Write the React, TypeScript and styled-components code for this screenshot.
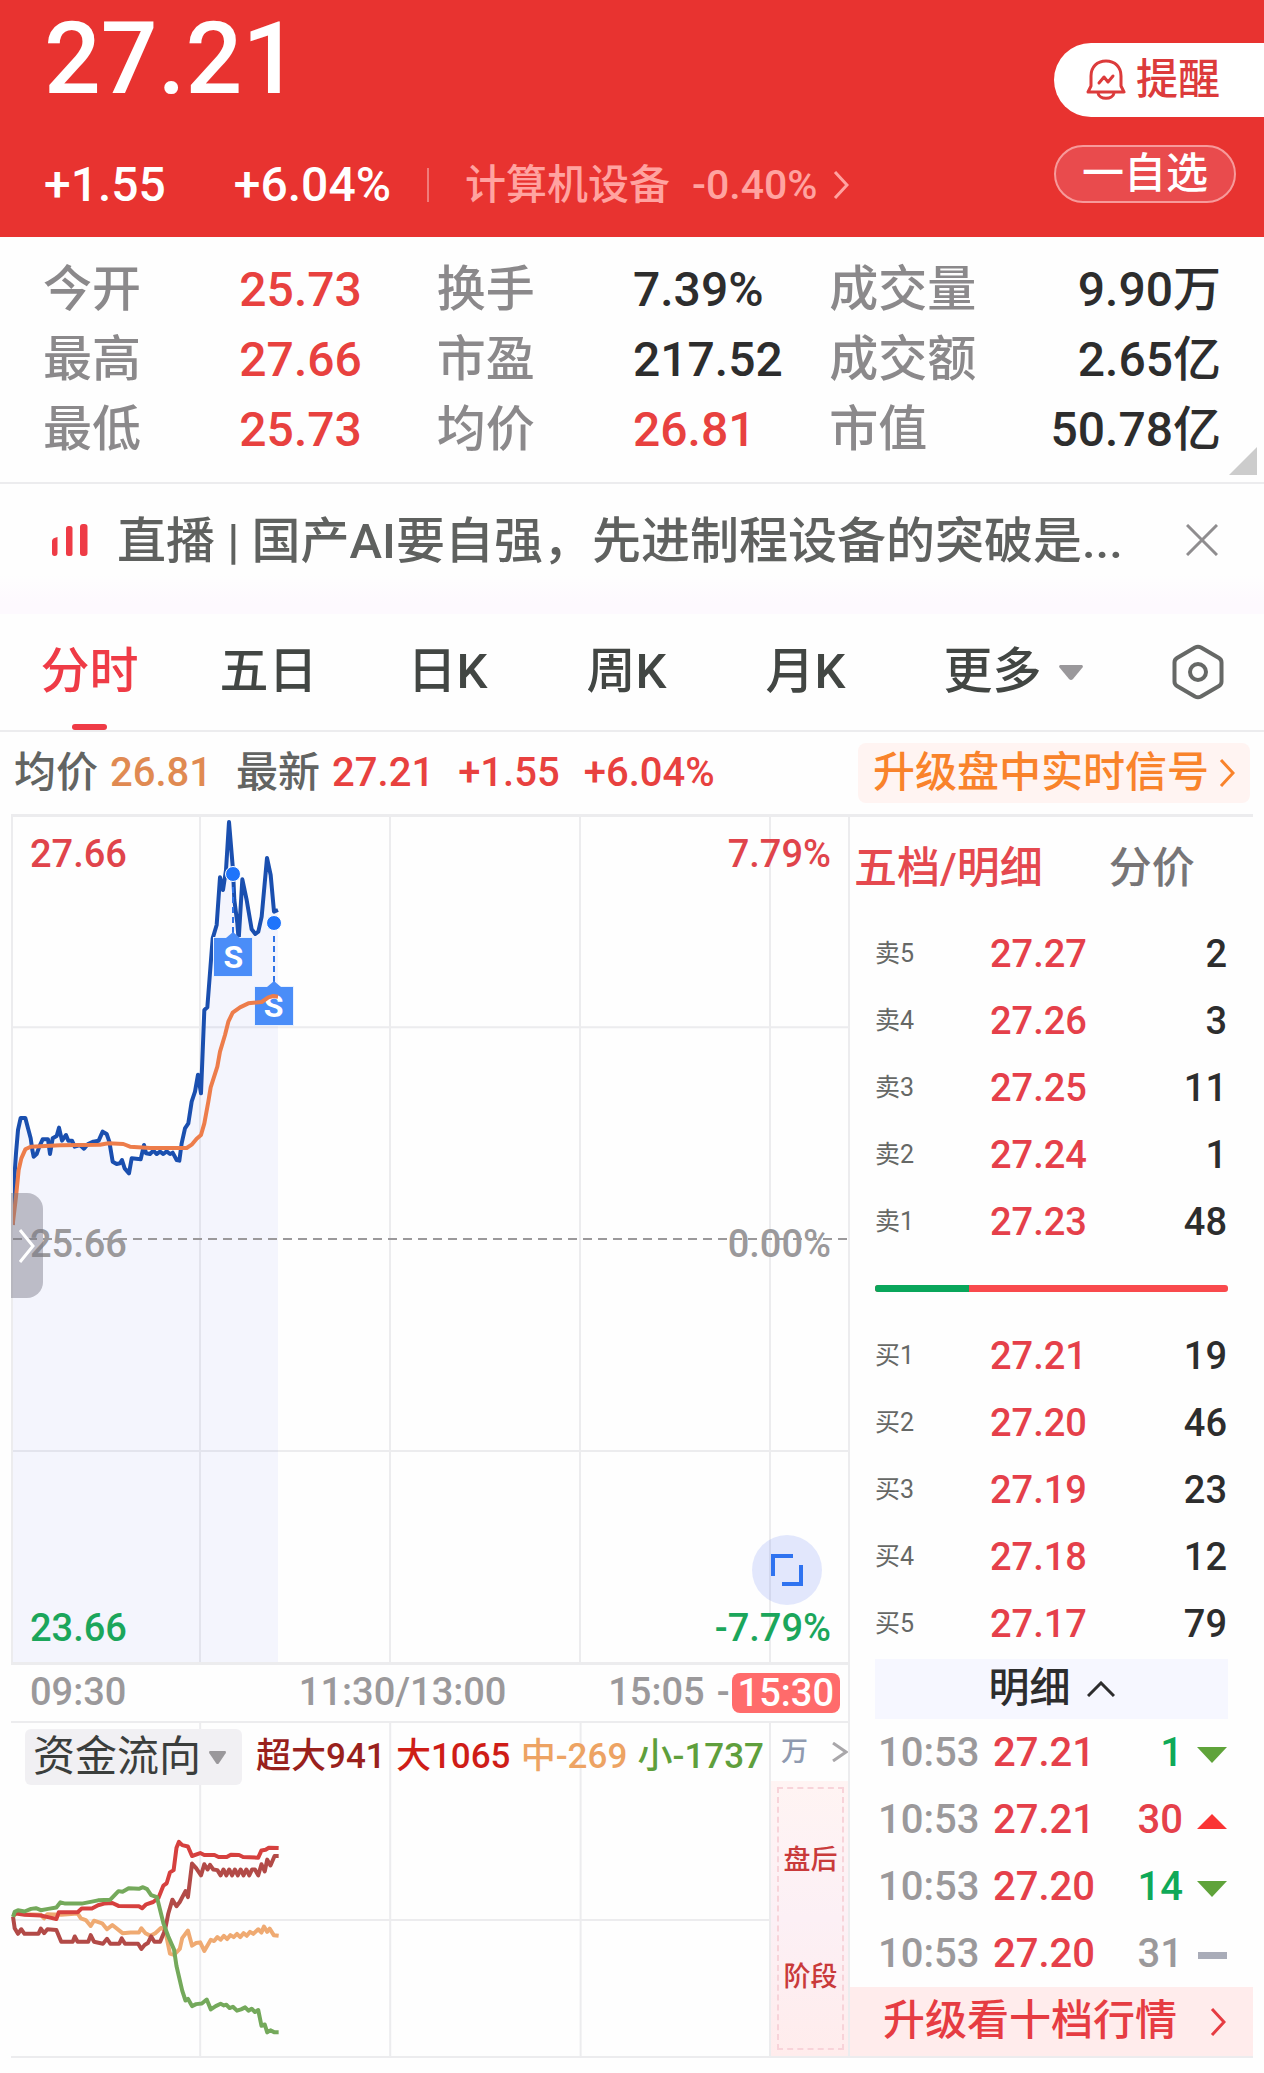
import React from "react";
import styled, { createGlobalStyle } from "styled-components";

const red = "#e8413f";
const line = "#ececee";

const GlobalStyle = createGlobalStyle`
  * { box-sizing: border-box; }
  body {
    margin: 0;
    background: #fefefe;
    color: #2d2d2d;
    font-family: Roboto, "Noto Sans CJK SC", sans-serif;
    font-weight: 500;
    line-height: 1.2;
  }
  button, select {
    margin: 0;
    padding: 0;
    border: 0;
    background: none;
    color: inherit;
    font: inherit;
    cursor: pointer;
  }
  a { color: inherit; text-decoration: none; }
`;

const Page = styled.div`
  display: flex;
  flex-direction: column;
`;

/* ---------- quote header ---------- */

const Header = styled.header`
  display: flex;
  justify-content: space-between;
  height: 237px;
  padding-left: 44px;
  background: #e83330;
  color: #fff;
`;

const Quote = styled.div`
  display: flex;
  flex-direction: column;
  justify-content: space-between;
  padding-bottom: 24px;
`;

const LastPrice = styled.div`
  font-size: 100px;
  line-height: 118px;
`;

const QuoteLine = styled.div`
  display: flex;
  align-items: center;
  font-size: 48px;
  line-height: 56px;
`;

const Percent = styled.span`
  margin: 0 36px 0 68px;
`;

const Sector = styled.a`
  display: flex;
  align-items: center;
  gap: 16px;
  height: 34px;
  padding-left: 36px;
  border-left: 2px solid #f07c7a;
  color: #ffa3a0;
  font-size: 41px;
`;

const SectorName = styled.span`
  margin-right: 6px;
`;

const HeaderActions = styled.div`
  display: flex;
  flex-direction: column;
  gap: 28px;
  width: 210px;
  padding-top: 43px;
`;

const RemindButton = styled.button`
  display: flex;
  align-items: center;
  gap: 10px;
  height: 74px;
  padding-left: 32px;
  border-radius: 37px 0 0 37px;
  background: #fff;
  color: #dc3b3b;
  font-size: 42px;
`;

const WatchButton = styled.button`
  width: 182px;
  height: 58px;
  border: 2px solid #f79a9a;
  border-radius: 29px;
  background: #e94b4d;
  font-size: 42px;
  line-height: 50px;
`;

/* ---------- key figures ---------- */

const Stats = styled.dl`
  position: relative;
  display: grid;
  grid-template-columns: 196fr 197fr 196fr 196fr 197fr 194fr;
  grid-auto-rows: 70px;
  margin: 0;
  padding: 18px 43px 17px;
  border-bottom: 2px solid ${line};
`;

const StatLabel = styled.dt`
  color: #8b898b;
  font-size: 49px;
  line-height: 70px;
`;

const StatValue = styled.dd<{ $color?: string; $right?: boolean }>`
  margin: 0;
  color: ${(p) => p.$color ?? "#2d2d2d"};
  font-size: 48px;
  line-height: 70px;
  text-align: ${(p) => (p.$right ? "right" : "left")};
  white-space: nowrap;
`;

const StatsCorner = styled.svg`
  position: absolute;
  right: 7px;
  bottom: 7px;
`;

/* ---------- live banner ---------- */

const LiveBar = styled.div`
  display: flex;
  align-items: center;
  height: 130px;
  padding: 0 46px 18px 50px;
  background: linear-gradient(#fefefe 70%, #fdf9fe 92%);
`;

const LiveText = styled.a`
  flex: 1;
  min-width: 0;
  margin-left: 26px;
  padding-top: 4px;
  overflow: hidden;
  color: #5f615f;
  font-size: 49px;
  line-height: 70px;
  white-space: nowrap;
`;

const IconButton = styled.button`
  display: flex;
  align-items: center;
  justify-content: center;
`;

/* ---------- period tabs ---------- */

const Tabs = styled.nav`
  display: grid;
  grid-template-columns: repeat(5, 179fr) 236fr 133fr;
  height: 118px;
  border-bottom: 2px solid ${line};
`;

const Tab = styled.button<{ $active?: boolean }>`
  position: relative;
  display: flex;
  align-items: center;
  justify-content: center;
  gap: 17px;
  color: ${(p) => (p.$active ? "#ef3b46" : "#424643")};
  font-size: 49px;

  &::after {
    content: "";
    display: ${(p) => (p.$active ? "block" : "none")};
    position: absolute;
    bottom: 0;
    width: 35px;
    height: 6px;
    border-radius: 3px;
    background: #ef3b46;
  }
`;

/* ---------- price line above the chart ---------- */

const PriceLine = styled.div`
  display: flex;
  align-items: center;
  justify-content: space-between;
  height: 82px;
  padding: 0 14px;
`;

const Prices = styled.div`
  display: flex;
  align-items: center;
  gap: 24px;
  font-size: 40px;
  line-height: 60px;
`;

const PriceItem = styled.span<{ $color: string }>`
  display: flex;
  gap: 12px;
  color: ${(p) => p.$color};
`;

const PriceName = styled.span`
  color: #626462;
  font-size: 42px;
`;

const SignalLink = styled.a`
  display: flex;
  align-items: center;
  gap: 10px;
  height: 60px;
  padding: 0 15px;
  border-radius: 8px;
  background: #fff4f2;
  color: #f9832b;
  font-size: 42px;
`;

/* ---------- main area ---------- */

const Main = styled.main`
  display: grid;
  grid-template-columns: minmax(0, 839fr) minmax(0, 403fr);
  margin: 0 11px 15px;
  border-top: 3px solid ${line};
`;

const ChartColumn = styled.section`
  display: flex;
  flex-direction: column;
  border-right: 2px solid ${line};
  border-bottom: 2px solid ${line};
`;

const PriceChart = styled.div`
  position: relative;
  height: 848px;
  border-left: 2px solid ${line};
  border-bottom: 3px solid ${line};
`;

const Plot = styled.svg`
  position: absolute;
  inset: 0;
  width: 100%;
  height: 100%;

  * { vector-effect: non-scaling-stroke; }
`;

const AxisLabel = styled.span<{ $top: number; $right?: boolean; $color: string }>`
  position: absolute;
  top: ${(p) => p.$top}px;
  ${(p) => (p.$right ? "right: 17px;" : "left: 17px;")}
  color: ${(p) => p.$color};
  font-size: 38px;
  line-height: 44px;
`;

const Marker = styled.div`
  position: absolute;
  display: flex;
  flex-direction: column;
  align-items: center;
  width: 40px;
  margin-left: -20px;
`;

const MarkerDot = styled.span`
  width: 16px;
  height: 16px;
  border: 1px solid #fff;
  border-radius: 50%;
  background: #1f74fb;
`;

const MarkerStem = styled.span`
  height: 46px;
  margin: 5px 0 4px;
  border-left: 2px dashed #2f73e6;
`;

const MarkerFlag = styled.span`
  position: relative;
  width: 40px;
  height: 40px;
  border: 1px solid #e8f1ff;
  background: #4a8df8;
  color: #fff;
  font-size: 32px;
  font-weight: 700;
  line-height: 38px;
  text-align: center;

  &::before {
    content: "";
    position: absolute;
    top: -6px;
    left: 12px;
    border: 7px solid transparent;
    border-top: 0;
    border-bottom: 6px solid #4a8df8;
  }
`;

const DrawerHandle = styled.button`
  position: absolute;
  top: 376px;
  left: -2px;
  display: flex;
  align-items: center;
  justify-content: center;
  width: 32px;
  height: 105px;
  border-radius: 0 16px 16px 0;
  background: rgba(120, 120, 132, 0.45);
`;

const ExpandButton = styled.button`
  position: absolute;
  right: 26px;
  bottom: 57px;
  display: flex;
  align-items: center;
  justify-content: center;
  width: 70px;
  height: 70px;
  border-radius: 50%;
  background: rgba(80, 115, 245, 0.16);
`;

const TimeAxis = styled.div`
  display: grid;
  grid-template-columns: 270fr auto 335fr;
  align-items: center;
  height: 58px;
  padding: 0 8px 0 19px;
  border-bottom: 2px solid ${line};
  color: #9b999b;
  font-size: 38px;
`;

const SessionEnd = styled.span`
  display: flex;
  align-items: center;
  justify-content: flex-end;
`;

const EndBadge = styled.span`
  margin-left: 2px;
  padding: 0 6px;
  border-radius: 8px;
  background: #ff6b6b;
  color: #fff;
  line-height: 40px;
`;

const Dash = styled.span`
  margin-left: 12px;
`;

/* ---------- capital flow ---------- */

const Flow = styled.div`
  display: grid;
  grid-template-columns: minmax(0, 1fr) 77px;
  flex: 1;
`;

const FlowPlot = styled.div`
  position: relative;
  border-right: 2px solid ${line};
`;

const FlowLegend = styled.div`
  position: relative;
  display: flex;
  align-items: center;
  gap: 14px;
  padding: 6px 5px 0 14px;
`;

const FlowPicker = styled.label`
  position: relative;
  display: flex;
  align-items: center;
  gap: 8px;
  height: 56px;
  padding: 0 16px 0 8px;
  border-radius: 6px;
  background: #f1f0f3;
`;

const FlowSelect = styled.select`
  width: 168px;
  height: 56px;
  appearance: none;
  color: #3b3e3c;
  font-size: 42px;
  font-weight: 400;
  line-height: 56px;
`;

const FlowValues = styled.div`
  display: flex;
  flex: 1;
  justify-content: space-between;
  font-size: 35px;
  line-height: 48px;
  white-space: nowrap;
`;

const FlowValue = styled.span<{ $color: string }>`
  color: ${(p) => p.$color};
`;

const FlowSide = styled.div`
  display: flex;
  flex-direction: column;
`;

const UnitLink = styled.a`
  display: flex;
  align-items: center;
  justify-content: space-between;
  height: 58px;
  padding-left: 10px;
  color: #8f9ab0;
  font-size: 27px;

  svg { color: #a9a7aa; }
`;

const AfterHours = styled.div`
  flex: 1;
  padding: 6px 4px 6px 6px;
  background: linear-gradient(#fff4f3, #fcf0f5 50%, #ffecec);
`;

const AfterHoursFrame = styled.div`
  display: flex;
  flex-direction: column;
  align-items: center;
  justify-content: center;
  gap: 85px;
  height: 100%;
  border: 2px dashed #f8d3d9;
  color: #c93a3a;
  font-size: 27px;
`;

/* ---------- order book ---------- */

const Book = styled.aside`
  display: flex;
  flex-direction: column;
  border-bottom: 2px solid ${line};
`;

const BookTabs = styled.div`
  display: flex;
  gap: 66px;
  height: 103px;
  padding: 0 4px;
  font-size: 43px;
`;

const BookTab = styled.button<{ $active?: boolean }>`
  color: ${(p) => (p.$active ? "#e5494f" : "#777577")};
`;

const DepthTable = styled.table`
  width: calc(100% - 50px);
  margin: 0 25px;
  border-collapse: collapse;
  table-layout: fixed;
`;

const DepthCell = styled.td<{ $color?: string; $right?: boolean }>`
  height: 67px;
  padding: 0 1px;
  color: ${(p) => p.$color ?? "#2d2d2d"};
  font-size: 38px;
  line-height: 44px;
  text-align: ${(p) => (p.$right ? "right" : "left")};
`;

const DepthLabel = styled.th`
  width: 114px;
  padding: 0;
  color: #666866;
  font-size: 25px;
  font-weight: 400;
  text-align: left;
`;

const Balance = styled.div`
  display: flex;
  height: 7px;
  margin: 30px 25px;
  overflow: hidden;
  border-radius: 3px;
  background: #f94a4d;
`;

const BalanceBuy = styled.span`
  background: #09a65b;
`;

const DetailToggle = styled.button`
  display: flex;
  align-items: center;
  justify-content: center;
  gap: 16px;
  height: 60px;
  margin: 2px 25px 0;
  background: #f6f7ff;
  color: #2d2d2d;
  font-size: 41px;
`;

const TradeTable = styled.table`
  width: calc(100% - 54px);
  margin: 0 26px 0 28px;
  border-collapse: collapse;
  table-layout: fixed;
`;

const TradeCell = styled.td<{ $color: string; $width: number; $right?: boolean }>`
  width: ${(p) => p.$width}px;
  height: 67px;
  padding: 0;
  color: ${(p) => p.$color};
  font-size: 40px;
  line-height: 44px;
  text-align: ${(p) => (p.$right ? "right" : "left")};

  svg { vertical-align: middle; }
`;

const UpgradeLink = styled.a`
  display: flex;
  align-items: center;
  justify-content: space-between;
  flex: 1;
  min-height: 69px;
  padding: 0 27px 0 33px;
  background: #ffecec;
  color: #e63c42;
  font-size: 42px;
`;

/* ---------- icons ---------- */

const Chevron = ({ w = 16, h = 28, stroke = 3 }: { w?: number; h?: number; stroke?: number }) => (
  <svg width={w} height={h} viewBox={`0 0 ${w} ${h}`} fill="none" stroke="currentColor" strokeWidth={stroke} aria-hidden="true">
    <path d={`M2 1 L${w - 2} ${h / 2} L2 ${h - 1}`} />
  </svg>
);

const Caret = ({ w, h, color }: { w: number; h: number; color: string }) => (
  <svg width={w} height={h} viewBox="0 0 24 15" preserveAspectRatio="none" fill={color} aria-hidden="true">
    <path d="M1 0 H23 Q24.500 1 23.500 2.500 L14 14 Q12 16 10 14 L.5 2.500 Q-.5 1 1 0Z" />
  </svg>
);

const BellIcon = () => (
  <svg width="40" height="42" viewBox="0 0 40 42" fill="none" stroke="currentColor" strokeWidth="3" strokeLinejoin="round" aria-hidden="true">
    <path d="M5 27 V17 C5 8 11 2 20 2 S35 8 35 17 V27 L38 33 H2 Z" />
    <path d="M12 34 C13 41 27 41 28 34" />
    <path d="M13 24 L18 18 L22 23 L27 17" strokeLinecap="round" />
  </svg>
);

const LiveIcon = () => (
  <svg width="41" height="34" viewBox="0 0 41 34" fill="#ee3b46" aria-hidden="true">
    <path d="M2 18 Q2 15 7.500 14 V30 Q7.500 33 4.700 33 T2 30Z" />
    <rect x="16" y="3" width="6.500" height="30" rx="2.500" />
    <rect x="30" y="1" width="7.500" height="32" rx="3" />
  </svg>
);

const CloseIcon = () => (
  <svg width="32" height="32" viewBox="0 0 32 32" stroke="#8f8d8f" strokeWidth="3" aria-hidden="true">
    <path d="M1 1 L31 31 M31 1 L1 31" />
  </svg>
);

const HexIcon = () => (
  <svg width="52" height="56" viewBox="0 0 52 56" fill="none" stroke="#666866" strokeWidth="4" strokeLinejoin="round" aria-hidden="true">
    <path d="M23 3.500 Q26 2 29 3.500 L47 14 Q49.500 15.500 49.500 18.500 V37.500 Q49.500 40.500 47 42 L29 52.500 Q26 54 23 52.500 L5 42 Q2.500 40.500 2.500 37.500 V18.500 Q2.500 15.500 5 14 Z" />
    <circle cx="26" cy="28" r="8" />
  </svg>
);

const ExpandIcon = () => (
  <svg width="34" height="34" viewBox="0 0 34 34" fill="none" stroke="#2f73f0" strokeWidth="4" aria-hidden="true">
    <path d="M3 23 V3 H23" />
    <path d="M31 12 V31 H12" />
  </svg>
);

const Tick = ({ kind }: { kind: "down" | "up" | "flat" }) => (
  <svg width="30" height="16" viewBox="0 0 30 16" aria-hidden="true">
    {kind === "down" && <path d="M0 0 H30 L15 16Z" fill="#5fa33a" />}
    {kind === "up" && <path d="M0 15 H30 L15 0Z" fill="#fa3434" />}
    {kind === "flat" && <rect x="1" y="4" width="29" height="7" fill="#a9acb8" />}
  </svg>
);

/* ---------- data ---------- */

const stats: { label: string; value: string; color?: string; right?: boolean }[] = [
  { label: "今开", value: "25.73", color: red },
  { label: "换手", value: "7.39%" },
  { label: "成交量", value: "9.90万", right: true },
  { label: "最高", value: "27.66", color: red },
  { label: "市盈", value: "217.52" },
  { label: "成交额", value: "2.65亿", right: true },
  { label: "最低", value: "25.73", color: red },
  { label: "均价", value: "26.81", color: red },
  { label: "市值", value: "50.78亿", right: true },
];

const asks = [
  ["卖5", "27.27", "2"],
  ["卖4", "27.26", "3"],
  ["卖3", "27.25", "11"],
  ["卖2", "27.24", "1"],
  ["卖1", "27.23", "48"],
];

const bids = [
  ["买1", "27.21", "19"],
  ["买2", "27.20", "46"],
  ["买3", "27.19", "23"],
  ["买4", "27.18", "12"],
  ["买5", "27.17", "79"],
];

const trades: { time: string; price: string; qty: string; kind: "down" | "up" | "flat"; color: string }[] = [
  { time: "10:53", price: "27.21", qty: "1", kind: "down", color: "#0fa958" },
  { time: "10:53", price: "27.21", qty: "30", kind: "up", color: "#e5404a" },
  { time: "10:53", price: "27.20", qty: "14", kind: "down", color: "#0fa958" },
  { time: "10:53", price: "27.20", qty: "31", kind: "flat", color: "#9b999b" },
];

const priceLine =
  "38,1275 42,1150 48,1060 54,990 62,954 76,954 84,985 92,1015 97,1050 101,1070 110,1062 118,1040 128,1018 144,1018 150,1062 158,1015 170,1008 177,983 186,1022 198,1005 205,1022 216,1022 224,1040 240,1035 252,1046 264,1032 280,1025 296,1022 308,995 320,1002 328,1025 338,1085 350,1092 360,1090 366,1080 374,1105 387,1120 395,1075 422,1078 432,1035 438,1060 450,1062 460,1052 470,1062 480,1055 490,1062 500,1054 510,1062 518,1058 530,1080 538,1082 545,1030 555,985 565,970 575,905 585,875 594,824 603,880 613,630 622,622 638,415 650,375 660,232 669,270 678,210 687,66 699,210 703,300 712,370 716,420 727,238 740,300 755,388 766,402 775,395 785,350 801,174 812,225 822,335 834,330";

const averageLine =
  "38,1275 48,1190 56,1110 64,1075 76,1048 92,1040 180,1036 300,1034 325,1030 370,1032 390,1040 450,1044 560,1044 575,1034 590,1016 603,1005 613,970 625,905 632,862 652,800 660,755 675,705 685,665 698,638 720,622 745,610 785,606 805,592 820,588 834,590";

const flowLines = [
  {
    color: "#efaa72",
    points:
      "32,950 40,938 60,942 100,944 108,955 116,942 150,944 190,940 198,955 210,960 222,978 230,962 250,970 262,988 275,975 300,1000 320,998 340,998 346,985 356,1000 368,1008 380,1000 394,984 404,990 416,1062 426,1066 440,1048 446,1015 460,992 470,1038 480,1030 490,1028 500,1054 516,1020 524,1024 532,1012 540,1020 548,1008 556,1018 564,1006 572,1012 580,1002 588,1012 596,1000 604,1008 612,996 620,1002 632,988 640,998 646,980 654,996 660,986 670,1006 682,1008",
  },
  {
    color: "#d6403e",
    points:
      "32,945 40,940 60,944 100,946 120,952 138,957 144,936 190,936 200,925 225,925 240,915 255,910 275,908 290,917 340,918 348,924 358,912 375,905 388,892 400,855 408,848 416,815 425,808 432,740 438,722 446,732 460,736 470,765 490,756 500,762 525,762 535,768 555,768 565,761 585,762 595,768 632,770 640,748 650,746 658,740 682,741",
  },
  {
    color: "#b24a47",
    points:
      "32,950 36,985 44,1002 52,988 60,1002 94,1002 100,986 108,1000 116,988 138,990 150,1026 178,1026 183,1010 190,1026 216,1026 222,1006 230,1026 252,1032 262,1017 270,1032 292,1032 298,1016 306,1032 338,1032 346,1048 354,1036 362,1030 370,1010 378,1026 392,1026 404,990 412,940 422,898 432,918 440,905 454,872 460,890 470,788 480,802 492,824 500,790 508,806 514,792 522,806 532,808 540,824 547,806 554,824 561,806 568,824 575,806 582,824 589,806 596,824 603,806 610,824 617,806 624,806 632,824 640,790 648,812 654,776 662,794 672,765 682,765",
  },
  {
    color: "#74a95b",
    points:
      "32,950 36,935 44,930 60,934 76,926 88,924 100,930 118,926 138,922 148,906 160,910 180,910 200,910 225,904 240,900 270,898 290,872 300,874 315,863 340,865 350,860 360,866 370,884 384,890 400,970 412,1010 426,1050 432,1100 446,1175 454,1205 460,1200 470,1222 480,1216 494,1214 506,1202 516,1232 528,1222 540,1215 548,1220 554,1218 562,1228 570,1224 580,1236 590,1232 600,1226 608,1236 616,1230 624,1240 632,1234 640,1282 648,1278 654,1302 662,1296 672,1302 682,1302",
  },
];

const signals = [
  { left: 26.4, top: 49 },
  { left: 31.2, top: 98 },
];

const BookRows = ({ rows }: { rows: string[][] }) => (
  <DepthTable>
    <tbody>
      {rows.map(([label, price, qty]) => (
        <tr key={label}>
          <DepthLabel scope="row">{label}</DepthLabel>
          <DepthCell $color="#e5404a">{price}</DepthCell>
          <DepthCell $right>{qty}</DepthCell>
        </tr>
      ))}
    </tbody>
  </DepthTable>
);

export default function App() {
  const buyShare = 94 / 353;
  return (
    <Page>
      <GlobalStyle />
      <Header>
        <Quote>
          <LastPrice>27.21</LastPrice>
          <QuoteLine>
            <span>+1.55</span>
            <Percent>+6.04%</Percent>
            <Sector href="#sector">
              <SectorName>计算机设备</SectorName>
              <span>-0.40%</span>
              <Chevron />
            </Sector>
          </QuoteLine>
        </Quote>
        <HeaderActions>
          <RemindButton type="button">
            <BellIcon />
            提醒
          </RemindButton>
          <WatchButton type="button">一自选</WatchButton>
        </HeaderActions>
      </Header>

      <Stats>
        {stats.map((s) => (
          <React.Fragment key={s.label}>
            <StatLabel>{s.label}</StatLabel>
            <StatValue $color={s.color} $right={s.right}>
              {s.value}
            </StatValue>
          </React.Fragment>
        ))}
        <StatsCorner width="28" height="28" viewBox="0 0 28 28" aria-hidden="true">
          <path d="M28 0 V28 H0Z" fill="#cccccc" />
        </StatsCorner>
      </Stats>

      <LiveBar>
        <LiveIcon />
        <LiveText href="#live">直播 | 国产AI要自强，先进制程设备的突破是...</LiveText>
        <IconButton type="button" aria-label="关闭">
          <CloseIcon />
        </IconButton>
      </LiveBar>

      <Tabs>
        <Tab type="button" $active>分时</Tab>
        <Tab type="button">五日</Tab>
        <Tab type="button">日K</Tab>
        <Tab type="button">周K</Tab>
        <Tab type="button">月K</Tab>
        <Tab type="button">
          更多
          <Caret w={24} h={15} color="#9a989b" />
        </Tab>
        <IconButton type="button" aria-label="设置">
          <HexIcon />
        </IconButton>
      </Tabs>

      <PriceLine>
        <Prices>
          <PriceItem $color="#e08a52">
            <PriceName>均价</PriceName>26.81
          </PriceItem>
          <PriceItem $color={red}>
            <PriceName>最新</PriceName>27.21
          </PriceItem>
          <PriceItem $color={red}>+1.55</PriceItem>
          <PriceItem $color={red}>+6.04%</PriceItem>
        </Prices>
        <SignalLink href="#signal">
          升级盘中实时信号
          <Chevron />
        </SignalLink>
      </PriceLine>

      <Main>
        <ChartColumn>
          <PriceChart>
            <Plot viewBox="39 51 2505 2535" preserveAspectRatio="none" fill="none" aria-label="分时走势">
              <g stroke={line} strokeWidth="2">
                <path d="M600 51 V2586 M1170 51 V2586 M1740 51 V2586 M2310 51 V2586" />
                <path d="M39 682 H2544 M39 1953 H2544" />
              </g>
              <polygon points={`38,2586 ${priceLine} 834,2586`} fill="rgba(80,100,240,0.055)" />
              <path d="M39 1317 H2544" stroke="#9b999b" strokeWidth="2" strokeDasharray="9 6" />
              <polyline points={priceLine} stroke="#1a4faf" strokeWidth="4" strokeLinejoin="round" />
            </Plot>
            {signals.map((s) => (
              <Marker key={s.left} style={{ left: `${s.left}%`, top: s.top }}>
                <MarkerDot />
                <MarkerStem />
                <MarkerFlag>S</MarkerFlag>
              </Marker>
            ))}
            <Plot viewBox="39 51 2505 2535" preserveAspectRatio="none" fill="none" aria-hidden="true">
              <polyline points={averageLine} stroke="#ed7d4b" strokeWidth="4" strokeLinejoin="round" />
            </Plot>
            <AxisLabel $top={15} $color="#e0444b">27.66</AxisLabel>
            <AxisLabel $top={15} $color="#e0444b" $right>7.79%</AxisLabel>
            <AxisLabel $top={405} $color="#9b999b">25.66</AxisLabel>
            <AxisLabel $top={405} $color="#9b999b" $right>0.00%</AxisLabel>
            <AxisLabel $top={789} $color="#1ba65b">23.66</AxisLabel>
            <AxisLabel $top={789} $color="#1ba65b" $right>-7.79%</AxisLabel>
            <DrawerHandle type="button" aria-label="展开侧栏">
              <svg width="18" height="34" viewBox="0 0 18 34" fill="none" stroke="#fff" strokeWidth="3" aria-hidden="true">
                <path d="M2 1 L15 17 L2 33" />
              </svg>
            </DrawerHandle>
            <ExpandButton type="button" aria-label="全屏">
              <ExpandIcon />
            </ExpandButton>
          </PriceChart>

          <TimeAxis>
            <span>09:30</span>
            <span>11:30/13:00</span>
            <SessionEnd>
              15:05<Dash>-</Dash>
              <EndBadge>15:30</EndBadge>
            </SessionEnd>
          </TimeAxis>

          <Flow>
            <FlowPlot>
              <Plot viewBox="27 360 1855 1014" preserveAspectRatio="none" fill="none" aria-label="资金流向走势">
                <g stroke={line} strokeWidth="2">
                  <path d="M490 360 V1374 M955 360 V1374 M1421 360 V1374 M27 960 H1882" />
                </g>
                {flowLines.map((f) => (
                  <polyline key={f.color} points={f.points} stroke={f.color} strokeWidth="4" strokeLinejoin="round" />
                ))}
              </Plot>
              <FlowLegend>
                <FlowPicker>
                  <FlowSelect aria-label="指标" defaultValue="资金流向">
                    <option>资金流向</option>
                  </FlowSelect>
                  <Caret w={17} h={13} color="#9a989b" />
                </FlowPicker>
                <FlowValues>
                  <FlowValue $color="#99211c">超大941</FlowValue>
                  <FlowValue $color="#cf1d17">大1065</FlowValue>
                  <FlowValue $color="#eda363">中-269</FlowValue>
                  <FlowValue $color="#5f9f3c">小-1737</FlowValue>
                </FlowValues>
              </FlowLegend>
            </FlowPlot>
            <FlowSide>
              <UnitLink href="#unit">
                万
                <Chevron w={17} h={20} />
              </UnitLink>
              <AfterHours>
                <AfterHoursFrame>
                  <span>盘后</span>
                  <span>阶段</span>
                </AfterHoursFrame>
              </AfterHours>
            </FlowSide>
          </Flow>
        </ChartColumn>

        <Book>
          <BookTabs>
            <BookTab type="button" $active>五档/明细</BookTab>
            <BookTab type="button">分价</BookTab>
          </BookTabs>
          <BookRows rows={asks} />
          <Balance>
            <BalanceBuy style={{ width: `${buyShare * 100}%` }} />
          </Balance>
          <BookRows rows={bids} />
          <DetailToggle type="button">
            明细
            <svg width="28" height="16" viewBox="0 0 28 16" fill="none" stroke="#2d2d2d" strokeWidth="3" aria-hidden="true">
              <path d="M1 15 L14 2 L27 15" />
            </svg>
          </DetailToggle>
          <TradeTable>
            <tbody>
              {trades.map((t, i) => (
                <tr key={i}>
                  <TradeCell $width={115} $color="#9b999b">{t.time}</TradeCell>
                  <TradeCell $width={110} $color="#e5404a">{t.price}</TradeCell>
                  <TradeCell $width={80} $color={t.color} $right>{t.qty}</TradeCell>
                  <TradeCell $width={44} $color={t.color} $right>
                    <Tick kind={t.kind} />
                  </TradeCell>
                </tr>
              ))}
            </tbody>
          </TradeTable>
          <UpgradeLink href="#level2">
            升级看十档行情
            <Chevron />
          </UpgradeLink>
        </Book>
      </Main>
    </Page>
  );
}
